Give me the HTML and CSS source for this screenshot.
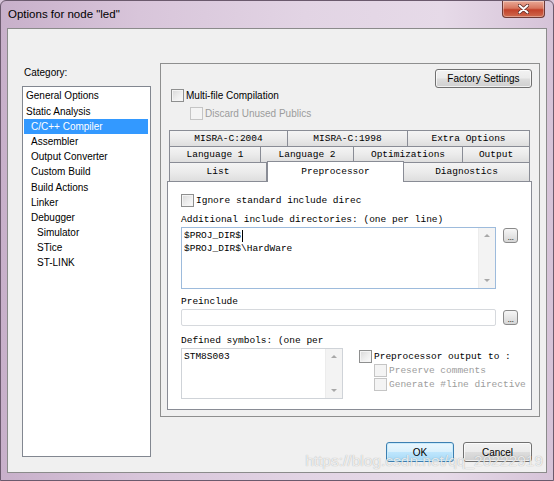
FILE: index.html
```html
<!DOCTYPE html>
<html>
<head>
<meta charset="utf-8">
<title>Options for node "led"</title>
<link rel="stylesheet" href="styles.css">
</head>
<body>
<div class="window">
  <div class="titlebar">
    <span class="title">Options for node "led"</span>
    <div class="close">
      <svg width="11" height="10" viewBox="0 0 11 10">
        <path d="M1.5 1.5 L9.5 8.5 M9.5 1.5 L1.5 8.5" stroke="#5b2a26" stroke-width="3.6" stroke-linecap="round" fill="none"/>
        <path d="M1.5 1.5 L9.5 8.5 M9.5 1.5 L1.5 8.5" stroke="#ffffff" stroke-width="2" stroke-linecap="round" fill="none"/>
      </svg>
    </div>
  </div>
  <div class="client">
    <div class="main">
      <div class="catcol">
        <div class="catlabel">Category:</div>
        <ul class="catlist">
          <li class="l0">General Options</li>
          <li class="l0">Static Analysis</li>
          <li class="l1 sel">C/C++ Compiler</li>
          <li class="l1">Assembler</li>
          <li class="l1">Output Converter</li>
          <li class="l1">Custom Build</li>
          <li class="l1">Build Actions</li>
          <li class="l1">Linker</li>
          <li class="l1">Debugger</li>
          <li class="l2">Simulator</li>
          <li class="l2">STice</li>
          <li class="l2">ST-LINK</li>
        </ul>
      </div>
      <div class="rightcol">
        <div class="panel">
          <div class="factory-row"><div class="btn factory">Factory Settings</div></div>
          <div class="chk multi"><span class="box"></span><span class="txt">Multi-file Compilation</span></div>
          <div class="chk discard disabled"><span class="box"></span><span class="txt">Discard Unused Publics</span></div>
          <div class="tabs">
            <div class="tabrow r1">
              <div class="tab">MISRA-C:2004</div>
              <div class="tab">MISRA-C:1998</div>
              <div class="tab">Extra Options</div>
            </div>
            <div class="tabrow r2">
              <div class="tab">Language 1</div>
              <div class="tab">Language 2</div>
              <div class="tab">Optimizations</div>
              <div class="tab">Output</div>
            </div>
            <div class="tabrow r3">
              <div class="tab">List</div>
              <div class="tab active">Preprocessor</div>
              <div class="tab">Diagnostics</div>
            </div>
          </div>
          <div class="pane">
            <div class="chk mono"><span class="box"></span><span class="txt">Ignore standard include direc</span></div>
            <div class="lbl first">Additional include directories: (one per line)</div>
            <div class="field-row">
              <div class="textarea ta1">
                <div class="ta-text">
                  <div class="line">$PROJ_DIR$<span class="caret"></span></div>
                  <div class="line">$PROJ_DIR$\HardWare</div>
                </div>
                <div class="vscroll"><span class="up"></span><span class="down"></span></div>
              </div>
              <div class="dots">...</div>
            </div>
            <div class="lbl pre">Preinclude</div>
            <div class="field-row">
              <div class="input"></div>
              <div class="dots">...</div>
            </div>
            <div class="defined">
              <div class="defcol">
                <div class="lbl">Defined symbols: (one per</div>
                <div class="textarea ta2">
                  <div class="ta-text">
                    <div class="line">STM8S003</div>
                  </div>
                  <div class="vscroll"><span class="up"></span><span class="down"></span></div>
                </div>
              </div>
              <div class="ppcol">
                <div class="chk mono"><span class="box"></span><span class="txt">Preprocessor output to :</span></div>
                <div class="chk mono sub disabled"><span class="box"></span><span class="txt">Preserve comments</span></div>
                <div class="chk mono sub disabled"><span class="box"></span><span class="txt">Generate #line directive</span></div>
              </div>
            </div>
          </div>
        </div>
        <div class="buttons">
          <div class="btn ok">OK</div>
          <div class="btn cancel">Cancel</div>
        </div>
      </div>
    </div>
    <div class="watermark">https://blog.csdn.net/qq_20222919</div>
  </div>
</div>
</body>
</html>
```
FILE: styles.css
```css
* { box-sizing: border-box; }
html, body { margin: 0; padding: 0; }
body {
  width: 554px;
  height: 481px;
  overflow: hidden;
  font-family: "Liberation Sans", Arial, sans-serif;
  font-size: 10px;
  color: #000;
  background: #d8c5da;
}
.window {
  width: 554px;
  height: 481px;
  display: flex;
  flex-direction: column;
  border: 1px solid #6b5a6d;
  border-radius: 6px 6px 0 0;
  padding: 0 6px 7px 6px;
  background: linear-gradient(90deg, #c8b0ca 0%, #d8c5da 25%, #e2d4e4 55%, #e6dae8 80%, #d6c3d8 100%);
}
.titlebar {
  height: 27px;
  display: flex;
  align-items: flex-start;
  flex: none;
}
.title {
  padding: 6px 0 0 1px;
  font-size: 11.5px;
  line-height: 14px;
  color: #000;
}
.close {
  margin-left: auto;
  margin-right: 2px;
  width: 43px;
  height: 17px;
  border: 1px solid #6e3a36;
  border-top: none;
  border-radius: 0 0 4px 4px;
  background: linear-gradient(180deg, #e9a996 0%, #d7765f 45%, #c2412a 55%, #cf6a4e 100%);
  display: flex;
  align-items: center;
  justify-content: center;
  box-shadow: inset 0 0 0 1px rgba(255,255,255,0.35);
}
.client {
  flex: 1;
  position: relative;
  background: #f0f0f0;
  border: 1px solid #8b8b8b;
  padding: 34px 0 0 14px;
}
.main {
  display: flex;
  gap: 9px;
  align-items: flex-start;
}
.catcol {
  width: 129px;
  display: flex;
  flex-direction: column;
}
.catlabel {
  height: 23px;
  padding: 3px 0 0 2px;
  line-height: 14px;
}
.catlist {
  list-style: none;
  margin: 0;
  padding: 1.4px 0 0 0;
  height: 371px;
  background: #fff;
  border: 1px solid #828790;
}
.catlist li {
  line-height: 15.2px;
  height: 15.2px;
  white-space: nowrap;
}
.catlist .l0 { padding-left: 3px; }
.catlist .l1 { padding-left: 8px; }
.catlist .l2 { padding-left: 14px; }
.catlist .sel {
  margin: 0 2px 0 1px;
  padding-left: 7px;
  background: #3399ff;
  color: #fff;
}
.rightcol {
  width: 380px;
  display: flex;
  flex-direction: column;
}
.panel {
  height: 354px;
  border: 1px solid #8e8f8f;
  padding: 5px 7px 6px 10px;
  display: flex;
  flex-direction: column;
}
.factory-row {
  display: flex;
  justify-content: flex-end;
}
.btn {
  border: 1px solid #707070;
  border-radius: 3px;
  background: linear-gradient(180deg, #f2f2f2 0%, #ebebeb 48%, #dddddd 52%, #cfcfcf 100%);
  box-shadow: inset 0 0 0 1px rgba(255,255,255,0.7);
  display: flex;
  align-items: center;
  justify-content: center;
  font-size: 10px;
  color: #000;
}
.factory {
  width: 97px;
  height: 19px;
}
.chk {
  display: flex;
  align-items: center;
  height: 13px;
  gap: 2px;
  white-space: nowrap;
}
.box {
  width: 13px;
  height: 13px;
  flex: none;
  border: 1px solid #8e8f8f;
  background: linear-gradient(135deg, #d8d8d8 0%, #eeeeee 55%, #fbfbfb 100%);
  box-shadow: inset 0 0 0 1px #f4f4f4;
}
.disabled .box {
  border-color: #c5c5c5;
  background: #f4f4f4;
  box-shadow: none;
}
.disabled .txt { color: #9c9c9c; }
.multi { margin-top: 1px; }
.discard { margin-top: 5px; margin-left: 19px; }
.tabs {
  margin: 10px -2px 0 -2px;
  display: flex;
  flex-direction: column;
  font-family: "Liberation Mono", "Courier New", monospace;
  font-size: 9.5px;
}
.tabrow {
  display: grid;
}
.r1 { grid-template-columns: 119px 120px 122px; height: 17px; }
.r2 { grid-template-columns: 92px 93px 109px 67px; height: 17px; margin-top: -1px; }
.r3 { grid-template-columns: 98px 137px 126px; height: 20px; margin-top: -2px; align-items: end; }
.tab {
  text-align: center;
  white-space: nowrap;
  overflow: hidden;
  border: 1px solid #898c95;
  border-left: none;
  background: linear-gradient(180deg, #f4f4f4 0%, #ebebeb 50%, #dedede 100%);
  height: 17px;
  line-height: 15px;
}
.tab:first-child { border-left: 1px solid #898c95; }
.r3 .tab {
  height: 19px;
  border-bottom: none;
  line-height: 18px;
}
.r3 .tab.active {
  position: relative;
  z-index: 1;
  height: 21px;
  margin-bottom: -1px;
  background: #fff;
  border-left: 1px solid #898c95;
  line-height: 19px;
}
.pane {
  flex: 1;
  margin: 0 0 0 -4px;
  background: #fff;
  border: 1px solid #898c95;
  padding: 12px 0 0 13px;
  overflow: hidden;
  font-family: "Liberation Mono", "Courier New", monospace;
  font-size: 9.5px;
}
.lbl {
  line-height: 12px;
  height: 12px;
  white-space: nowrap;
}
.lbl.first { margin-top: 7px; }
.lbl.pre { margin-top: 7px; }
.field-row {
  display: flex;
  gap: 7px;
  align-items: flex-start;
  margin-top: 1px;
}
.textarea {
  display: flex;
  background: #fff;
  border: 1px solid #cfd3d8;
}
.ta1 {
  width: 315px;
  height: 62px;
  border-color: #9dbbdc;
}
.ta2 {
  width: 162px;
  height: 51px;
  margin-top: 1px;
}
.ta-text {
  flex: 1;
  padding: 1px 0 0 2px;
}
.line {
  line-height: 13px;
  height: 13px;
  white-space: nowrap;
  display: flex;
  align-items: center;
}
.caret {
  display: inline-block;
  width: 1px;
  height: 12px;
  background: #000;
  margin-left: 1px;
}
.vscroll {
  width: 17px;
  flex: none;
  background: #f3f3f3;
  border-left: 1px solid #ececec;
  display: flex;
  flex-direction: column;
  justify-content: space-between;
  align-items: center;
  padding: 6px 0 6px 0;
}
.up, .down {
  width: 0;
  height: 0;
  border-left: 3px solid transparent;
  border-right: 3px solid transparent;
}
.up { border-bottom: 3px solid #a8a8a8; }
.down { border-top: 3px solid #a8a8a8; }
.dots {
  width: 15px;
  height: 15px;
  margin-top: 1px;
  border: 1px solid #8a8a8a;
  border-radius: 3px;
  background: linear-gradient(180deg, #f6f6f6 0%, #e6e6e6 50%, #d6d6d6 100%);
  font-family: "Liberation Sans", Arial, sans-serif;
  font-size: 9px;
  line-height: 16px;
  text-align: center;
  color: #333;
  letter-spacing: -0.5px;
}
.input {
  width: 315px;
  height: 17px;
  border: 1px solid #d6d9dd;
  border-radius: 2px;
  background: #fff;
}
.defined {
  display: flex;
  margin-top: 9px;
}
.defcol {
  width: 162px;
  display: flex;
  flex-direction: column;
}
.ppcol {
  margin-left: 16px;
  padding-top: 15px;
  display: flex;
  flex-direction: column;
  gap: 1px;
}
.chk.sub { margin-left: 15px; }
.buttons {
  margin-top: 25px;
  display: flex;
  justify-content: flex-end;
  gap: 9px;
  padding-right: 8px;
}
.ok {
  width: 68px;
  height: 20px;
  border-color: #3c7fb1;
  background: linear-gradient(180deg, #eaf6fd 0%, #d9f0fc 48%, #bee6fd 52%, #a7d9f5 100%);
  box-shadow: inset 0 0 0 1px #c8eafb;
}
.cancel {
  width: 69px;
  height: 20px;
}
.watermark {
  position: absolute;
  right: 3px;
  bottom: 2px;
  font-size: 15.5px;
  line-height: 18px;
  color: rgba(255,255,255,0.8);
  text-shadow: 0 0 1px rgba(0,0,0,0.35);
  white-space: nowrap;
}
```
